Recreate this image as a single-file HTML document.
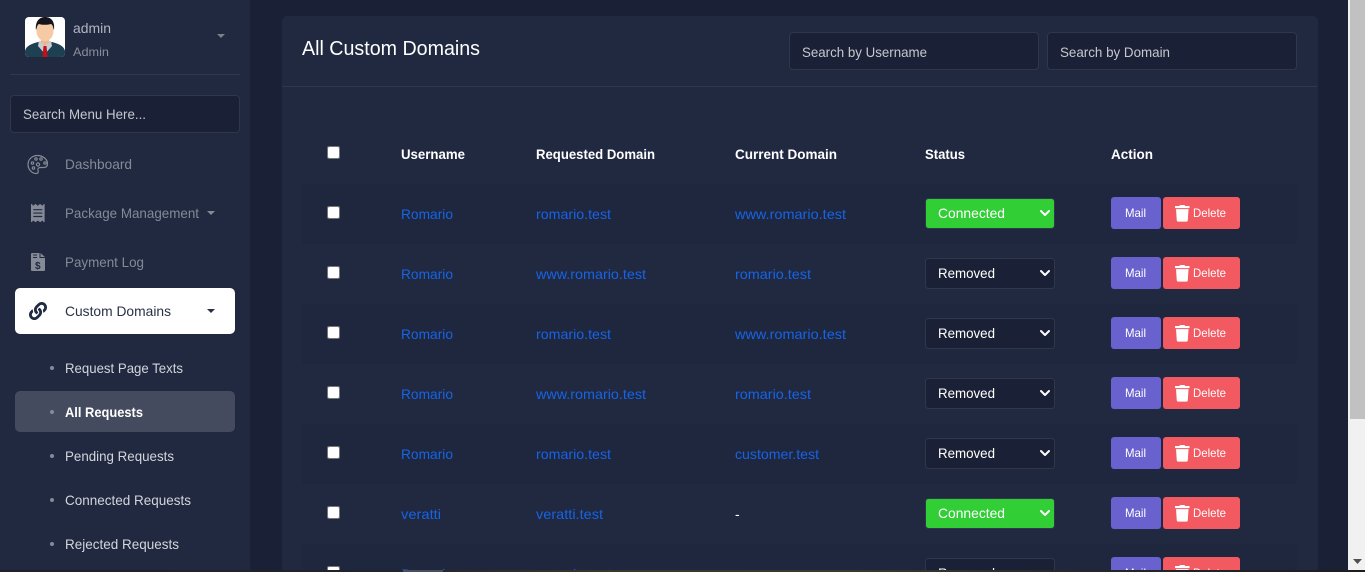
<!DOCTYPE html>
<html lang="en">
<head>
<meta charset="utf-8">
<title>All Custom Domains</title>
<style>
html,body{margin:0;padding:0;width:1365px;height:572px;overflow:hidden;background:#1a2035;font-family:"Liberation Sans",sans-serif}
#page{position:relative;width:1365px;height:572px;overflow:hidden}
.box{position:absolute;box-sizing:border-box}
input[type=checkbox]{position:absolute;margin:0;width:13px;height:13px}
svg.layer{position:absolute;left:0;top:0;display:block}
text{font-family:"Liberation Sans",sans-serif;font-size:14px}
.lnk{fill:#1763e6}
.th{fill:#fff;font-weight:700;font-size:14px}
.mu{fill:#858a96}
.sub{fill:#d3d5da}
.w{fill:#fff}
.b{font-size:12px;fill:#fff}
</style>
</head>
<body>
<div id="page">
<div class="box" style="left:0;top:0;width:250px;height:572px;background:#202940"></div>
<div class="box" style="left:250px;top:0;width:1098px;height:572px;background:#1a2035"></div>
<div class="box" style="left:282px;top:16px;width:1036px;height:556px;background:#202940;border-radius:5px 5px 0 0"></div>
<div class="box" style="left:282px;top:86px;width:1035px;height:1px;background:#2f374b"></div>
<div class="box" style="left:789px;top:32px;width:250px;height:38px;background:#1a2035;border:1px solid #2f374b;border-radius:4px"></div>
<div class="box" style="left:1047px;top:32px;width:250px;height:38px;background:#1a2035;border:1px solid #2f374b;border-radius:4px"></div>
<div class="box" style="left:10px;top:74px;width:230px;height:1px;background:#2f374b"></div>
<div class="box" style="left:10px;top:95px;width:230px;height:38px;background:#1a2035;border:1px solid #2f374b;border-radius:4px"></div>
<div class="box" style="left:15px;top:288px;width:220px;height:46px;background:#fff;border-radius:5px"></div>
<div class="box" style="left:15px;top:391px;width:220px;height:41px;background:#454b5e;border-radius:5px"></div>

<svg class="layer" width="1365" height="572" viewBox="0 0 1365 572" xmlns="http://www.w3.org/2000/svg">
<defs>
<linearGradient id="strip" x1="0" x2="1" y1="0" y2="0">
<stop offset="0" stop-color="#1f2226"/><stop offset=".29" stop-color="#20252b"/><stop offset=".45" stop-color="#3a382c"/><stop offset=".62" stop-color="#3b392d"/><stop offset=".8" stop-color="#25262a"/><stop offset="1" stop-color="#1c1d20"/>
</linearGradient>
<path id="trash" d="M432 32H312l-9.400-18.700A24 24 0 0 0 281.100 0H166.800a23.720 23.720 0 0 0-21.400 13.300L136 32H16A16 16 0 0 0 0 48v32a16 16 0 0 0 16 16h416a16 16 0 0 0 16-16V48a16 16 0 0 0-16-16zM53.200 467a48 48 0 0 0 47.900 45h245.800a48 48 0 0 0 47.900-45L416 128H32z"/>
<g id="btns">
<rect x="1111" y="197" width="50" height="32" rx="3" fill="#6861ce"/>
<text class="b" x="1125" y="217" textLength="21" lengthAdjust="spacingAndGlyphs">Mail</text>
<rect x="1163" y="197" width="77" height="32" rx="3" fill="#f25961"/>
<use href="#trash" transform="translate(1175 205) scale(.0325)" fill="#fff"/>
<text class="b" x="1193" y="217" textLength="33" lengthAdjust="spacingAndGlyphs">Delete</text>
</g>
<path id="chev" d="M1041 211l4 4 4-4" fill="none" stroke="#fff" stroke-width="2" stroke-linecap="round" stroke-linejoin="round"/>
<g id="conn">
<rect x="925.500" y="198.500" width="129" height="30" rx="3" fill="#31ce36" stroke="#2f374b"/>
<text class="w" x="938" y="218" textLength="67" lengthAdjust="spacingAndGlyphs">Connected</text>
<use href="#chev"/>
</g>
<g id="rem">
<rect x="925.500" y="198.500" width="129" height="30" rx="3" fill="#1a2035" stroke="#2f374b"/>
<text class="w" x="938" y="218" textLength="57" lengthAdjust="spacingAndGlyphs">Removed</text>
<use href="#chev"/>
</g>
</defs>

<!-- row stripes -->
<g fill="#1e273e">
<rect x="302" y="184" width="995" height="60"/>
<rect x="302" y="304" width="995" height="60"/>
<rect x="302" y="424" width="995" height="60"/>
<rect x="302" y="544" width="995" height="60"/>
</g>

<!-- avatar -->
<g>
<clipPath id="av"><rect x="25" y="17" width="40" height="40" rx="4"/></clipPath>
<g clip-path="url(#av)">
<rect x="25" y="17" width="40" height="40" fill="#fff"/>
<path d="M25 57v-6c1-5 6-7 13-9l7 2 7-2c7 2 12 4 13 9v6z" fill="#1d4052"/>
<path d="M39 41h12l1 5-7 8-7-8z" fill="#c9cdd0"/>
<path d="M43.500 46h3l1 11h-5z" fill="#c40f1a"/>
<path d="M41 36h8v7l-4 3-4-3z" fill="#e8b890"/>
<ellipse cx="45" cy="31" rx="8.500" ry="10" fill="#f6caa4"/>
<path d="M36 30c-1-8 3-13 9-13s10 4 9 13c-1-2-1-5-3-6-4 1-9 1-12 0-2 1-2 4-3 6z" fill="#14141a"/>
</g>
</g>
<text x="73" y="33" textLength="38" lengthAdjust="spacingAndGlyphs" style="fill:#b2b5c0;font-size:14px">admin</text>
<text x="73" y="56" textLength="36" lengthAdjust="spacingAndGlyphs" style="fill:#8b8e9a;font-size:12px">Admin</text>
<path d="M217 34h8l-4 4z" fill="#7d808b"/>
<text x="23" y="119" textLength="123" lengthAdjust="spacingAndGlyphs" style="fill:#c6c8ce;font-size:14px">Search Menu Here...</text>

<!-- palette icon -->
<g fill="none" stroke="#858a96" stroke-width="1.200">
<path d="M37.500 155.500c-5.500 0-9.500 4-9.500 9s4 9 8 9c2.500 0 2.500-1.500 2-3-.6-2 .5-3 2.500-3h3.500c2.500 0 3.500-1.800 3.500-4 0-4-4.500-8-10-8z"/>
<circle cx="32.500" cy="163" r="1.200"/><circle cx="36" cy="159" r="1.200"/><circle cx="41" cy="159" r="1.200"/><circle cx="45" cy="163" r="1.200"/><circle cx="33.500" cy="168" r="1.200"/><circle cx="38" cy="164.500" r="1.600"/>
</g>
<!-- receipt icon -->
<path transform="translate(31 204) scale(.0355)" fill="#858a96" d="M358.400 3.200L320 48 265.600 3.200a15.900 15.900 0 0 0-19.200 0L192 48 137.600 3.200a15.900 15.900 0 0 0-19.200 0L64 48 25.600 3.200C15-4.700 0 2.800 0 16v480c0 13.200 15 20.700 25.600 12.800L64 464l54.400 44.800a15.900 15.900 0 0 0 19.200 0L192 464l54.400 44.800a15.900 15.900 0 0 0 19.200 0L320 464l38.400 44.800c10.500 7.900 25.600.4 25.600-12.800V16c0-13.200-15-20.700-25.600-12.800zM320 360c0 4.400-3.600 8-8 8H72c-4.400 0-8-3.600-8-8v-16c0-4.400 3.600-8 8-8h240c4.400 0 8 3.600 8 8v16zm0-96c0 4.400-3.600 8-8 8H72c-4.400 0-8-3.600-8-8v-16c0-4.400 3.600-8 8-8h240c4.400 0 8 3.600 8 8v16zm0-96c0 4.400-3.600 8-8 8H72c-4.400 0-8-3.600-8-8v-16c0-4.400 3.600-8 8-8h240c4.400 0 8 3.600 8 8v16z"/>
<!-- invoice icon -->
<path d="M31 254a1 1 0 0 1 1-1h7.500v5h5.500v12a1 1 0 0 1-1 1H32a1 1 0 0 1-1-1zM40.500 253l4.500 4h-4.500z" fill="#858a96"/>
<path d="M33 255h4M33 257.500h4" stroke="#202940" stroke-width="1"/>
<text x="35" y="269" style="font-size:10px;font-weight:700;fill:#202940">$</text>
<!-- link icon -->
<path transform="translate(29 302) scale(.0352)" fill="#1f2a44" d="M326.612 185.391c59.747 59.809 58.927 155.698.36 214.59-.11.12-.24.25-.36.37l-67.200 67.200c-59.270 59.270-155.699 59.262-214.960 0-59.270-59.260-59.270-155.700 0-214.960l37.106-37.106c9.840-9.840 26.786-3.300 27.294 10.606.648 17.722 3.826 35.527 9.690 52.721 1.986 5.822.567 12.262-3.783 16.612l-13.087 13.087c-28.026 28.026-28.905 73.660-1.155 101.960 28.024 28.579 74.086 28.749 102.325.51l67.200-67.190c28.191-28.191 28.073-73.757 0-101.830-3.701-3.694-7.429-6.564-10.341-8.569a16.037 16.037 0 0 1-6.947-12.606c-.396-10.567 3.348-21.456 11.698-29.806l21.054-21.055c5.521-5.521 14.182-6.199 20.584-1.731a152.482 152.482 0 0 1 20.522 17.197zM467.547 44.449c-59.261-59.262-155.690-59.270-214.960 0l-67.200 67.200c-.12.12-.25.25-.36.37-58.566 58.892-59.387 154.781.36 214.590a152.454 152.454 0 0 0 20.521 17.196c6.402 4.468 15.064 3.789 20.584-1.731l21.054-21.055c8.350-8.350 12.094-19.239 11.698-29.806a16.037 16.037 0 0 0-6.947-12.606c-2.912-2.005-6.640-4.875-10.341-8.569-28.073-28.073-28.191-73.639 0-101.830l67.200-67.190c28.239-28.239 74.300-28.069 102.325.51 27.750 28.300 26.872 73.934-1.155 101.960l-13.087 13.087c-4.350 4.350-5.769 10.790-3.783 16.612 5.864 17.194 9.042 34.999 9.690 52.721.509 13.906 17.454 20.446 27.294 10.606l37.106-37.106c59.271-59.259 59.271-155.699.001-214.959z"/>

<!-- nav -->
<text class="mu" x="65" y="169" textLength="67" lengthAdjust="spacingAndGlyphs">Dashboard</text>
<text class="mu" x="65" y="218" textLength="134" lengthAdjust="spacingAndGlyphs">Package Management</text>
<path d="M207 211h8l-4 4z" fill="#858a96"/>
<text class="mu" x="65" y="267" textLength="79" lengthAdjust="spacingAndGlyphs">Payment Log</text>
<text x="65" y="316" textLength="106" lengthAdjust="spacingAndGlyphs" style="fill:#2a3047">Custom Domains</text>
<path d="M207 309h8l-4 4z" fill="#2a3047"/>
<g fill="#858a96"><circle cx="52" cy="368" r="2"/><circle cx="52" cy="412" r="2"/><circle cx="52" cy="456" r="2"/><circle cx="52" cy="500" r="2"/><circle cx="52" cy="544" r="2"/></g>
<text class="sub" x="65" y="373" textLength="118" lengthAdjust="spacingAndGlyphs">Request Page Texts</text>
<text x="65" y="417" textLength="78" lengthAdjust="spacingAndGlyphs" style="fill:#fff;font-weight:700">All Requests</text>
<text class="sub" x="65" y="461" textLength="109" lengthAdjust="spacingAndGlyphs">Pending Requests</text>
<text class="sub" x="65" y="505" textLength="126" lengthAdjust="spacingAndGlyphs">Connected Requests</text>
<text class="sub" x="65" y="549" textLength="114" lengthAdjust="spacingAndGlyphs">Rejected Requests</text>

<!-- header -->
<text class="w" x="302" y="55" textLength="178" lengthAdjust="spacingAndGlyphs" style="font-size:20px">All Custom Domains</text>
<text x="802" y="57" textLength="125" lengthAdjust="spacingAndGlyphs" style="fill:#c6c8ce;font-size:14px">Search by Username</text>
<text x="1060" y="57" textLength="110" lengthAdjust="spacingAndGlyphs" style="fill:#c6c8ce;font-size:14px">Search by Domain</text>

<!-- table head -->
<text class="th" x="401" y="159" textLength="64" lengthAdjust="spacingAndGlyphs">Username</text>
<text class="th" x="536" y="159" textLength="119" lengthAdjust="spacingAndGlyphs">Requested Domain</text>
<text class="th" x="735" y="159" textLength="102" lengthAdjust="spacingAndGlyphs">Current Domain</text>
<text class="th" x="925" y="159" textLength="40" lengthAdjust="spacingAndGlyphs">Status</text>
<text class="th" x="1111" y="159" textLength="42" lengthAdjust="spacingAndGlyphs">Action</text>

<!-- rows -->
<text class="lnk" x="401" y="219" textLength="52" lengthAdjust="spacingAndGlyphs">Romario</text>
<text class="lnk" x="536" y="219" textLength="75" lengthAdjust="spacingAndGlyphs">romario.test</text>
<text class="lnk" x="735" y="219" textLength="111" lengthAdjust="spacingAndGlyphs">www.romario.test</text>
<use href="#conn"/><use href="#btns"/>

<text class="lnk" x="401" y="279" textLength="52" lengthAdjust="spacingAndGlyphs">Romario</text>
<text class="lnk" x="536" y="279" textLength="110" lengthAdjust="spacingAndGlyphs">www.romario.test</text>
<text class="lnk" x="735" y="279" textLength="76" lengthAdjust="spacingAndGlyphs">romario.test</text>
<use href="#rem" y="60"/><use href="#btns" y="60"/>

<text class="lnk" x="401" y="339" textLength="52" lengthAdjust="spacingAndGlyphs">Romario</text>
<text class="lnk" x="536" y="339" textLength="75" lengthAdjust="spacingAndGlyphs">romario.test</text>
<text class="lnk" x="735" y="339" textLength="111" lengthAdjust="spacingAndGlyphs">www.romario.test</text>
<use href="#rem" y="120"/><use href="#btns" y="120"/>

<text class="lnk" x="401" y="399" textLength="52" lengthAdjust="spacingAndGlyphs">Romario</text>
<text class="lnk" x="536" y="399" textLength="110" lengthAdjust="spacingAndGlyphs">www.romario.test</text>
<text class="lnk" x="735" y="399" textLength="76" lengthAdjust="spacingAndGlyphs">romario.test</text>
<use href="#rem" y="180"/><use href="#btns" y="180"/>

<text class="lnk" x="401" y="459" textLength="52" lengthAdjust="spacingAndGlyphs">Romario</text>
<text class="lnk" x="536" y="459" textLength="75" lengthAdjust="spacingAndGlyphs">romario.test</text>
<text class="lnk" x="735" y="459" textLength="84" lengthAdjust="spacingAndGlyphs">customer.test</text>
<use href="#rem" y="240"/><use href="#btns" y="240"/>

<text class="lnk" x="401" y="519" textLength="40" lengthAdjust="spacingAndGlyphs">veratti</text>
<text class="lnk" x="536" y="519" textLength="67" lengthAdjust="spacingAndGlyphs">veratti.test</text>
<text class="w" x="735" y="519">-</text>
<use href="#conn" y="300"/><use href="#btns" y="300"/>

<text class="lnk" x="401" y="579" textLength="52" lengthAdjust="spacingAndGlyphs">Romario</text>
<text class="lnk" x="536" y="579" textLength="75" lengthAdjust="spacingAndGlyphs">romario.test</text>
<use href="#rem" y="360"/><use href="#btns" y="360"/>

<!-- scrollbar -->
<rect x="1348" y="0" width="17" height="572" fill="#f1f1f1"/>
<rect x="1350" y="0" width="15" height="419" fill="#c1c1c1"/>
<path d="M1353 559h9l-4.500 5z" fill="#505050"/>
<!-- bottom strip -->
<rect x="0" y="570" width="1365" height="2" fill="url(#strip)"/>
<rect x="403" y="570" width="40" height="2" fill="#4a4f5e"/>
</svg>

<input type="checkbox" style="left:327px;top:146px">
<input type="checkbox" style="left:327px;top:206px">
<input type="checkbox" style="left:327px;top:266px">
<input type="checkbox" style="left:327px;top:326px">
<input type="checkbox" style="left:327px;top:386px">
<input type="checkbox" style="left:327px;top:446px">
<input type="checkbox" style="left:327px;top:506px">
<div class="box" style="left:327px;top:566px;width:13px;height:4px;background:#fff;border:1px solid #767676;border-bottom:0;border-radius:2px 2px 0 0"></div>
</div>
</body>
</html>
